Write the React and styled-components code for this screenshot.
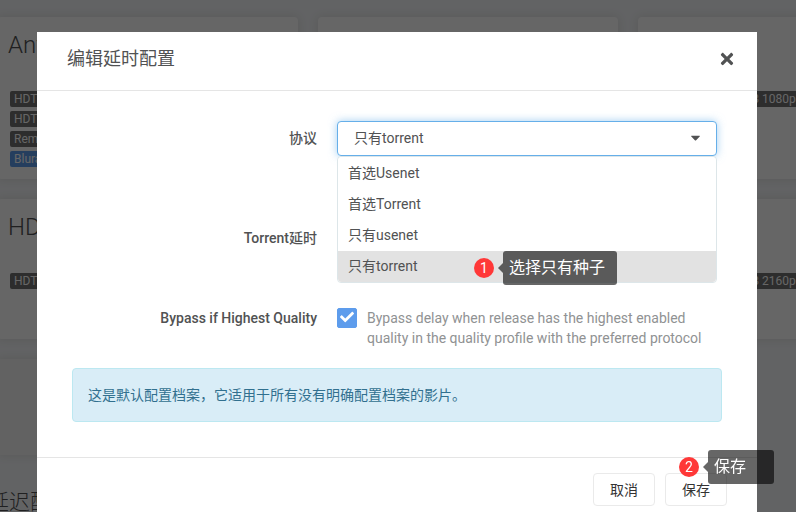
import React, { useState } from 'react'
import styled, { createGlobalStyle, css } from 'styled-components'
import { FaCaretDown, FaCheck, FaTimes } from 'react-icons/fa'

const GlobalStyle = createGlobalStyle`
  * {
    box-sizing: border-box;
  }

  body {
    margin: 0;
    overflow: hidden;

    background-color: #f5f7fa;
    color: #515253;
    font-family: Roboto, 'Noto Sans CJK SC', sans-serif;
    font-size: 14px;
    line-height: 20px;
  }

  button,
  input,
  select {
    font: inherit;
    color: inherit;
  }
`

const Page = styled.main`
  height: 100vh;
  padding-top: 17px;
  margin-left: -12px;
  overflow: hidden;
`

const Cards = styled.div`
  display: grid;
  grid-template-columns: repeat(3, 300px);
  gap: 20px;

  padding-left: 10px;
`

const Card = styled.section`
  min-height: ${({ $height }) => $height}px;
  padding: 10px 10px 8px;

  border-radius: 4px;
  background-color: ${({ $muted }) => ($muted ? '#f5f5f5' : '#fff')};
  box-shadow: 0 0 10px 1px #e1e1e1;
`

const CardTitle = styled.h2`
  height: 62px;
  margin: 0;

  font-weight: 300;
  font-size: 24px;
  line-height: 36px;
`

const TagRow = styled.div`
  display: flex;
  gap: 4px;

  margin: 2px 2px 4px;
`

const Tag = styled.span`
  height: 16px;
  padding: 0 4px;

  border-radius: 2px;
  background-color: ${({ $primary }) => ($primary ? '#5d9cec' : '#707070')};
  color: #fff;
  font-size: 12px;
  line-height: 16px;
  white-space: nowrap;
`

const SectionTitle = styled.h2`
  margin: 32px 0 0;

  font-weight: 300;
  font-size: 21px;
  line-height: 30px;
`

const Backdrop = styled.div`
  position: fixed;
  inset: 0;

  padding: 32px 39px 0 37px;

  background-color: rgba(0, 0, 0, 0.6);
`

const Modal = styled.div`
  background-color: #fff;
`

const ModalHeader = styled.header`
  display: flex;
  justify-content: space-between;

  padding: 12px 20px 16px 30px;

  border-bottom: 1px solid #e5e5e5;
`

const ModalTitle = styled.h1`
  margin: 0;

  font-weight: 400;
  font-size: 18px;
  line-height: 30px;
`

const CloseButton = styled.button`
  display: flex;
  align-items: center;
  justify-content: center;

  width: 20px;
  height: 30px;
  padding: 0;

  border: 0;
  background: none;
  font-size: 18px;
`

const ModalBody = styled.div`
  padding: 30px 30px 35px;
`

const FormGroup = styled.div`
  display: grid;
  grid-template-columns: 250px 1fr;
  column-gap: 20px;
  align-items: start;

  max-width: 650px;
  min-height: ${({ $height }) => $height}px;
  margin-bottom: 20px;
`

const Label = styled.label`
  font-weight: 500;
  line-height: 35px;
  text-align: right;
`

const SelectWrapper = styled.div`
  position: relative;
`

const controlStyle = css`
  display: block;
  width: 100%;
  height: 35px;
  padding: 0 16px 2px;

  border: 1px solid #dde6e9;
  border-radius: 4px;
  background-color: #fff;
  outline: none;
`

const TextInput = styled.input`
  ${controlStyle}
`

const Select = styled.select`
  ${controlStyle}
  appearance: none;

  border-color: #66afe9;
  box-shadow: 0 0 8px rgba(102, 175, 233, 0.6);
`

const Caret = styled(FaCaretDown)`
  position: absolute;
  top: 9px;
  right: 14px;

  font-size: 15px;
  pointer-events: none;
`

const Menu = styled.ul`
  position: absolute;
  top: 35px;
  left: 0;
  z-index: 1;

  display: grid;
  grid-auto-rows: 1fr;
  width: 100%;
  height: 127px;
  padding: 0;
  margin: 0;

  border: 1px solid #dde6e9;
  border-radius: 4px;
  background-color: #fff;
  list-style: none;
`

const MenuItem = styled.li`
  position: relative;

  display: flex;
  align-items: center;

  padding: 0 10px;

  background-color: ${({ $selected }) => ($selected ? '#e2e2e2' : '#fff')};

  &:first-child {
    border-radius: 4px 4px 0 0;
  }

  &:last-child {
    border-radius: 0 0 4px 4px;
  }
`

const CheckRow = styled.div`
  display: flex;
  gap: 10px;

  padding-top: 7px;
`

const CheckBox = styled.span`
  position: relative;

  flex: none;
  width: 20px;
  height: 20px;

  > input {
    display: block;
    width: 20px;
    height: 20px;
    margin: 0;
    appearance: none;

    border: 1px solid #ccc;
    border-radius: 2px;
    background-color: #fff;
  }

  > input:checked {
    border-color: #5d9cec;
    background-color: #5d9cec;
  }

  > svg {
    position: absolute;
    top: 2px;
    left: 3px;

    color: #fff;
    font-size: 14px;
    pointer-events: none;
  }
`

const HelpText = styled.span`
  color: #909293;
`

const Alert = styled.div`
  max-width: 650px;
  padding: 16px 15px;
  margin: 0 auto;

  border: 1px solid #bce8f1;
  border-radius: 4px;
  background-color: #d9edf7;
  color: #31708f;
`

const ModalFooter = styled.footer`
  display: flex;
  justify-content: flex-end;
  gap: 10px;

  padding: 15px 30px;

  border-top: 1px solid #e5e5e5;
`

const ButtonWrapper = styled.div`
  position: relative;
`

const Button = styled.button`
  height: 33px;
  padding: 0 16px;

  border: 1px solid #eaeaea;
  border-radius: 4px;
  background-color: #fff;
  color: #333;
`

const Step = styled.div`
  position: absolute;
  top: ${({ $top }) => $top}px;
  left: ${({ $left }) => $left}px;
  z-index: 2;

  display: flex;
  align-items: center;
`

const StepNumber = styled.span`
  width: 20px;
  height: 20px;
  margin-right: 4px;

  border-radius: 50%;
  background-color: #ff3838;
  color: #fff;
  text-align: center;
`

const StepArrow = styled.span`
  border: 5px solid transparent;
  border-left-width: 0;
  border-right-color: rgba(0, 0, 0, 0.6);
`

const StepText = styled.span`
  min-width: 66px;
  padding: 0 12px 0 6px;

  border-radius: 3px;
  background-color: rgba(0, 0, 0, 0.6);
  color: #fff;
  font-size: 16px;
  line-height: 34px;
  white-space: nowrap;
`

const profiles = [
  {
    title: 'Any',
    height: 162,
    rows: [['HDTV-720p'], ['HDTV-1080p'], ['Remux-1080p'], ['Bluray-1080p']],
  },
  { height: 162 },
  { height: 162, rows: [['HDTV-1080p', 'WEB 1080p']] },
  { title: 'HD-1080p', height: 140, rows: [['HDTV-1080p']] },
  { height: 140 },
  { height: 140, rows: [['HDTV-2160p', 'WEB 2160p']] },
  { height: 96, muted: true },
]

const protocols = ['首选Usenet', '首选Torrent', '只有usenet', '只有torrent']

function ProfileCard({ title, height, rows = [], muted }) {
  return (
    <Card $height={height} $muted={muted}>
      <CardTitle>{title}</CardTitle>
      {rows.map((tags) => (
        <TagRow key={tags[0]}>
          {tags.map((tag) => (
            <Tag key={tag} $primary={tag.startsWith('Bluray')}>
              {tag}
            </Tag>
          ))}
        </TagRow>
      ))}
    </Card>
  )
}

function StepMark({ number, top, left, children }) {
  return (
    <Step $top={top} $left={left}>
      <StepNumber>{number}</StepNumber>
      <StepArrow />
      <StepText>{children}</StepText>
    </Step>
  )
}

export default function App() {
  const [protocol, setProtocol] = useState('只有torrent')
  const [bypass, setBypass] = useState(true)

  return (
    <>
      <GlobalStyle />
      <Page>
        <Cards>
          {profiles.map((profile, index) => (
            <ProfileCard key={index} {...profile} />
          ))}
        </Cards>
        <SectionTitle>延迟配置</SectionTitle>
      </Page>
      <Backdrop>
        <Modal role="dialog" aria-labelledby="modal-title">
          <ModalHeader>
            <ModalTitle id="modal-title">编辑延时配置</ModalTitle>
            <CloseButton type="button" aria-label="关闭">
              <FaTimes />
            </CloseButton>
          </ModalHeader>
          <ModalBody>
            <FormGroup $height={80}>
              <Label htmlFor="protocol">协议</Label>
              <SelectWrapper>
                <Select
                  id="protocol"
                  value={protocol}
                  onChange={(e) => setProtocol(e.target.value)}
                >
                  {protocols.map((name) => (
                    <option key={name}>{name}</option>
                  ))}
                </Select>
                <Caret />
                <Menu>
                  {protocols.map((name) => (
                    <MenuItem
                      key={name}
                      $selected={name === protocol}
                      onClick={() => setProtocol(name)}
                    >
                      {name}
                      {name === '只有torrent' && (
                        <StepMark number={1} top={0} left={136}>
                          选择只有种子
                        </StepMark>
                      )}
                    </MenuItem>
                  ))}
                </Menu>
              </SelectWrapper>
            </FormGroup>
            <FormGroup $height={60}>
              <Label htmlFor="delay">Torrent延时</Label>
              <TextInput id="delay" type="number" />
            </FormGroup>
            <FormGroup>
              <Label htmlFor="bypass">Bypass if Highest Quality</Label>
              <CheckRow>
                <CheckBox>
                  <input
                    id="bypass"
                    type="checkbox"
                    checked={bypass}
                    onChange={() => setBypass(!bypass)}
                  />
                  {bypass && <FaCheck />}
                </CheckBox>
                <HelpText>
                  Bypass delay when release has the highest enabled quality in the quality profile
                  with the preferred protocol
                </HelpText>
              </CheckRow>
            </FormGroup>
            <Alert>这是默认配置档案，它适用于所有没有明确配置档案的影片。</Alert>
          </ModalBody>
          <ModalFooter>
            <Button type="button">取消</Button>
            <ButtonWrapper>
              <Button type="button">保存</Button>
              <StepMark number={2} top={-23} left={14}>
                保存
              </StepMark>
            </ButtonWrapper>
          </ModalFooter>
        </Modal>
      </Backdrop>
    </>
  )
}
